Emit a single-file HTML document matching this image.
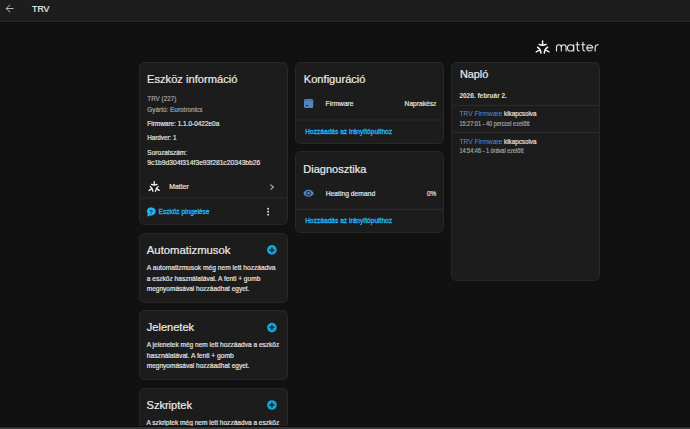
<!DOCTYPE html>
<html><head><meta charset="utf-8"><title>TRV</title>
<style>
html,body{margin:0;padding:0;background:#111111;width:690px;height:429px;overflow:hidden}
svg{display:block;font-family:"Liberation Sans", sans-serif}
</style></head><body>
<svg width="690" height="429" viewBox="0 0 690 429">
<rect x="0" y="0" width="690" height="21" fill="#1d1d1d"/>
<rect x="0" y="21" width="690" height="1" fill="#272727"/>
<rect x="0" y="22" width="690" height="1" fill="#0e0e0e"/>
<rect x="139.5" y="62.5" width="148" height="162" rx="5" ry="5" fill="#1c1c1c" stroke="#282828" stroke-width="1"/>
<rect x="139.5" y="233.5" width="148" height="69" rx="5" ry="5" fill="#1c1c1c" stroke="#282828" stroke-width="1"/>
<rect x="139.5" y="310.5" width="148" height="69" rx="5" ry="5" fill="#1c1c1c" stroke="#282828" stroke-width="1"/>
<rect x="139.5" y="388.5" width="148" height="59" rx="5" ry="5" fill="#1c1c1c" stroke="#282828" stroke-width="1"/>
<rect x="295.5" y="62.5" width="148" height="81" rx="5" ry="5" fill="#1c1c1c" stroke="#282828" stroke-width="1"/>
<rect x="295.5" y="151.5" width="148" height="81" rx="5" ry="5" fill="#1c1c1c" stroke="#282828" stroke-width="1"/>
<rect x="451.5" y="62.5" width="148" height="218" rx="5" ry="5" fill="#1c1c1c" stroke="#282828" stroke-width="1"/>
<rect x="140" y="197.5" width="147" height="1" fill="#2b2b2b"/>
<rect x="296" y="119.5" width="147" height="1" fill="#2b2b2b"/>
<rect x="296" y="209.0" width="147" height="1" fill="#2b2b2b"/>
<rect x="452" y="105.0" width="147" height="1" fill="#2b2b2b"/>
<rect x="452" y="132.0" width="147" height="1" fill="#2b2b2b"/>
<path d="M13.1 8.5 H6.2 M9.8 5.1 L6.2 8.5 L9.8 11.9" fill="none" stroke="#bdbdbd" stroke-width="0.95" stroke-linecap="round" stroke-linejoin="round"/>
<g transform="translate(542.6 48.2)"><path d="M0 -7.40 V -3.11 M -3.48 -3.85 Q 0 -2.07 3.48 -3.85" fill="none" stroke="#fff" stroke-width="1.35" stroke-linecap="round"/><g transform="rotate(120)"><path d="M0 -7.40 V -3.11 M -3.48 -3.85 Q 0 -2.07 3.48 -3.85" fill="none" stroke="#fff" stroke-width="1.35" stroke-linecap="round"/></g><g transform="rotate(240)"><path d="M0 -7.40 V -3.11 M -3.48 -3.85 Q 0 -2.07 3.48 -3.85" fill="none" stroke="#fff" stroke-width="1.35" stroke-linecap="round"/></g></g>
<g fill="none" stroke="#ececec" stroke-width="1.1" stroke-linecap="round"><path d="M556.5 51 V47.2 A2.4 2.4 0 0 1 561.3 47.2 V51 M561.3 47.2 A2.4 2.4 0 0 1 566.1 47.2 V51"/><circle cx="570.6" cy="47.9" r="3.1"/><path d="M573.7 44.8 V51"/><path d="M577.3 42.4 V49.3 Q577.3 51 579.2 51 M576.1 44.8 H579.3"/><path d="M582.9 42.4 V49.3 Q582.9 51 584.8 51 M581.7 44.8 H584.9"/><path d="M586.7 47.9 H592.7 A3 3 0 1 0 591.9 50"/><path d="M595.1 51 V47.6 Q595.1 44.8 598.2 44.8"/></g>
<g transform="translate(154.2 187.4)"><path d="M0 -5.90 V -2.48 M -2.77 -3.07 Q 0 -1.65 2.77 -3.07" fill="none" stroke="#fff" stroke-width="1.25" stroke-linecap="round"/><g transform="rotate(120)"><path d="M0 -5.90 V -2.48 M -2.77 -3.07 Q 0 -1.65 2.77 -3.07" fill="none" stroke="#fff" stroke-width="1.25" stroke-linecap="round"/></g><g transform="rotate(240)"><path d="M0 -5.90 V -2.48 M -2.77 -3.07 Q 0 -1.65 2.77 -3.07" fill="none" stroke="#fff" stroke-width="1.25" stroke-linecap="round"/></g></g>
<path d="M270.4 184.6 L273.4 187.1 L270.4 189.6" fill="none" stroke="#b4b4b4" stroke-width="1.15"/>
<path transform="translate(262.25 205.85) scale(0.4875)" d="M12,16A2,2 0 0,1 14,18A2,2 0 0,1 12,20A2,2 0 0,1 10,18A2,2 0 0,1 12,16M12,10A2,2 0 0,1 14,12A2,2 0 0,1 12,14A2,2 0 0,1 10,12A2,2 0 0,1 12,10M12,4A2,2 0 0,1 14,6A2,2 0 0,1 12,8A2,2 0 0,1 10,6A2,2 0 0,1 12,4Z" fill="#e1e1e1"/>
<path d="M151 207.2 A5 4.2 0 1 1 150.5 215.6 L146.6 216.4 L148 214 A5 4.2 0 0 1 151 207.2 Z" fill="#22b4f2"/><text x="149.2" y="214.2" font-size="6" font-weight="700" fill="#1c1c1c">?</text>
<rect x="304" y="99" width="9.2" height="9" rx="1.5" fill="#5086bf"/><rect x="305" y="100" width="7.2" height="0.8" fill="#3d6790"/><ellipse cx="307" cy="105.6" rx="1.3" ry="0.7" fill="#1c1c1c"/>
<path transform="translate(302.82 187.55) scale(0.477)" d="M12,9A3,3 0 0,0 9,12A3,3 0 0,0 12,15A3,3 0 0,0 15,12A3,3 0 0,0 12,9M12,17A5,5 0 0,1 7,12A5,5 0 0,1 12,7A5,5 0 0,1 17,12A5,5 0 0,1 12,17M12,4.5C7,4.5 2.73,7.61 1,12C2.73,16.39 7,19.5 12,19.5C17,19.5 21.27,16.39 23,12C21.27,7.61 17,4.5 12,4.5Z" fill="#5086bf"/>
<circle cx="271.9" cy="249.9" r="4.85" fill="#0fa6dc"/><path d="M269.4 249.9 H274.4 M271.9 247.4 V252.4" stroke="#1c1c1c" stroke-width="1.5"/>
<circle cx="271.9" cy="327.6" r="4.85" fill="#0fa6dc"/><path d="M269.4 327.6 H274.4 M271.9 325.1 V330.1" stroke="#1c1c1c" stroke-width="1.5"/>
<circle cx="271.9" cy="405" r="4.85" fill="#0fa6dc"/><path d="M269.4 405 H274.4 M271.9 402.5 V407.5" stroke="#1c1c1c" stroke-width="1.5"/>
<text x="32" y="11.8" font-size="9.8" fill="#f0f0f0" font-weight="400" textLength="17.50" lengthAdjust="spacingAndGlyphs" stroke="#f0f0f0" stroke-width="0.2">TRV</text>
<text x="147" y="82.8" font-size="11" fill="#ebebeb" font-weight="400" textLength="90.50" lengthAdjust="spacingAndGlyphs" stroke="#ebebeb" stroke-width="0.2">Eszköz információ</text>
<text x="147.3" y="101.2" font-size="6.9" fill="#a4a4a4" font-weight="400" textLength="29.00" lengthAdjust="spacingAndGlyphs" stroke="#a4a4a4" stroke-width="0.2">TRV (227)</text>
<text x="147.3" y="111.7" font-size="6.9" fill="#a4a4a4" font-weight="400" textLength="55.20" lengthAdjust="spacingAndGlyphs" stroke="#a4a4a4" stroke-width="0.2">Gyártó: Eurotronics</text>
<text x="147.3" y="126" font-size="6.9" fill="#e1e1e1" font-weight="400" textLength="72.00" lengthAdjust="spacingAndGlyphs" stroke="#e1e1e1" stroke-width="0.2">Firmware: 1.1.0-0422e0a</text>
<text x="147.3" y="140.2" font-size="6.9" fill="#e1e1e1" font-weight="400" textLength="29.20" lengthAdjust="spacingAndGlyphs" stroke="#e1e1e1" stroke-width="0.2">Hardver: 1</text>
<text x="147.3" y="155" font-size="6.9" fill="#e1e1e1" font-weight="400" textLength="39.70" lengthAdjust="spacingAndGlyphs" stroke="#e1e1e1" stroke-width="0.2">Sorozatszám:</text>
<text x="147.3" y="165" font-size="6.9" fill="#e1e1e1" font-weight="400" textLength="113.00" lengthAdjust="spacingAndGlyphs" stroke="#e1e1e1" stroke-width="0.2">9c1b9d304f314f3e93f281c20343bb26</text>
<text x="169.2" y="189.2" font-size="6.9" fill="#e1e1e1" font-weight="400" textLength="19.60" lengthAdjust="spacingAndGlyphs" stroke="#e1e1e1" stroke-width="0.2">Matter</text>
<text x="158.6" y="213.8" font-size="6.9" fill="#22b4f2" font-weight="400" textLength="50.80" lengthAdjust="spacingAndGlyphs" stroke="#22b4f2" stroke-width="0.32">Eszköz pingelése</text>
<text x="303.8" y="83.2" font-size="11" fill="#ebebeb" font-weight="400" textLength="61.70" lengthAdjust="spacingAndGlyphs" stroke="#ebebeb" stroke-width="0.2">Konfiguráció</text>
<text x="325.6" y="106.1" font-size="6.9" fill="#e1e1e1" font-weight="400" textLength="28.00" lengthAdjust="spacingAndGlyphs" stroke="#e1e1e1" stroke-width="0.2">Firmware</text>
<text x="404.6" y="106.1" font-size="6.9" fill="#e1e1e1" font-weight="400" textLength="31.70" lengthAdjust="spacingAndGlyphs" stroke="#e1e1e1" stroke-width="0.2">Naprakész</text>
<text x="305.2" y="134.1" font-size="6.9" fill="#22b4f2" font-weight="400" textLength="86.90" lengthAdjust="spacingAndGlyphs" stroke="#22b4f2" stroke-width="0.32">Hozzáadás az irányítópulthoz</text>
<text x="303.3" y="172.8" font-size="11" fill="#ebebeb" font-weight="400" textLength="63.00" lengthAdjust="spacingAndGlyphs" stroke="#ebebeb" stroke-width="0.2">Diagnosztika</text>
<text x="325.7" y="195.6" font-size="6.9" fill="#e1e1e1" font-weight="400" textLength="49.50" lengthAdjust="spacingAndGlyphs" stroke="#e1e1e1" stroke-width="0.2">Heating demand</text>
<text x="427" y="195.6" font-size="6.9" fill="#e1e1e1" font-weight="400" textLength="9.20" lengthAdjust="spacingAndGlyphs" stroke="#e1e1e1" stroke-width="0.2">0%</text>
<text x="305.2" y="223.4" font-size="6.9" fill="#22b4f2" font-weight="400" textLength="86.90" lengthAdjust="spacingAndGlyphs" stroke="#22b4f2" stroke-width="0.32">Hozzáadás az irányítópulthoz</text>
<text x="459.9" y="77.8" font-size="10.5" fill="#ebebeb" font-weight="400" textLength="28.40" lengthAdjust="spacingAndGlyphs" stroke="#ebebeb" stroke-width="0.2">Napló</text>
<text x="459.4" y="98.1" font-size="6.9" fill="#e1e1e1" font-weight="700" textLength="47.50" lengthAdjust="spacingAndGlyphs">2026. február 2.</text>
<text x="504" y="116.1" font-size="6.9" fill="#e1e1e1" font-weight="400" textLength="32.50" lengthAdjust="spacingAndGlyphs" stroke="#e1e1e1" stroke-width="0.2">kikapcsolva</text>
<text x="459.4" y="125.5" font-size="6.6" fill="#a4a4a4" font-weight="400" textLength="70.10" lengthAdjust="spacingAndGlyphs" stroke="#a4a4a4" stroke-width="0.2">15:27:01 - 40 perccel ezelőtt</text>
<text x="504" y="143.5" font-size="6.9" fill="#e1e1e1" font-weight="400" textLength="32.50" lengthAdjust="spacingAndGlyphs" stroke="#e1e1e1" stroke-width="0.2">kikapcsolva</text>
<text x="459.4" y="152.8" font-size="6.6" fill="#a4a4a4" font-weight="400" textLength="64.10" lengthAdjust="spacingAndGlyphs" stroke="#a4a4a4" stroke-width="0.2">14:54:46 - 1 órával ezelőtt</text>
<text x="146.8" y="253.9" font-size="11" fill="#ebebeb" font-weight="400" textLength="83.70" lengthAdjust="spacingAndGlyphs" stroke="#ebebeb" stroke-width="0.2">Automatizmusok</text>
<text x="146.8" y="270.2" font-size="6.9" fill="#e1e1e1" font-weight="400" textLength="128.70" lengthAdjust="spacingAndGlyphs" stroke="#e1e1e1" stroke-width="0.2">A automatizmusok még nem lett hozzáadva</text>
<text x="146.8" y="280.8" font-size="6.9" fill="#e1e1e1" font-weight="400" textLength="113.50" lengthAdjust="spacingAndGlyphs" stroke="#e1e1e1" stroke-width="0.2">a eszköz használatával. A fenti + gomb</text>
<text x="146.8" y="290.8" font-size="6.9" fill="#e1e1e1" font-weight="400" textLength="102.60" lengthAdjust="spacingAndGlyphs" stroke="#e1e1e1" stroke-width="0.2">megnyomásával hozzáadhat egyet.</text>
<text x="146.8" y="330.9" font-size="11" fill="#ebebeb" font-weight="400" textLength="47.30" lengthAdjust="spacingAndGlyphs" stroke="#ebebeb" stroke-width="0.2">Jelenetek</text>
<text x="146.8" y="347.2" font-size="6.9" fill="#e1e1e1" font-weight="400" textLength="132.40" lengthAdjust="spacingAndGlyphs" stroke="#e1e1e1" stroke-width="0.2">A jelenetek még nem lett hozzáadva a eszköz</text>
<text x="146.8" y="357.8" font-size="6.9" fill="#e1e1e1" font-weight="400" textLength="87.00" lengthAdjust="spacingAndGlyphs" stroke="#e1e1e1" stroke-width="0.2">használatával. A fenti + gomb</text>
<text x="146.8" y="367.8" font-size="6.9" fill="#e1e1e1" font-weight="400" textLength="102.60" lengthAdjust="spacingAndGlyphs" stroke="#e1e1e1" stroke-width="0.2">megnyomásával hozzáadhat egyet.</text>
<text x="146.5" y="408.5" font-size="11" fill="#ebebeb" font-weight="400" textLength="45.50" lengthAdjust="spacingAndGlyphs" stroke="#ebebeb" stroke-width="0.2">Szkriptek</text>
<text x="146.5" y="425.2" font-size="6.9" fill="#e1e1e1" font-weight="400" textLength="132.80" lengthAdjust="spacingAndGlyphs" stroke="#e1e1e1" stroke-width="0.2">A szkriptek még nem lett hozzáadva a eszköz</text>
<text x="459.4" y="116.1" font-size="6.8" fill="#5b8fc7" textLength="42.90" lengthAdjust="spacingAndGlyphs">TRV Firmware</text>
<text x="459.4" y="143.5" font-size="6.8" fill="#5b8fc7" textLength="42.90" lengthAdjust="spacingAndGlyphs">TRV Firmware</text>
<rect x="0" y="426" width="690" height="1" fill="#0c0c0c"/>
<rect x="0" y="427" width="690" height="2" fill="#353535"/>
</svg>
</body></html>
